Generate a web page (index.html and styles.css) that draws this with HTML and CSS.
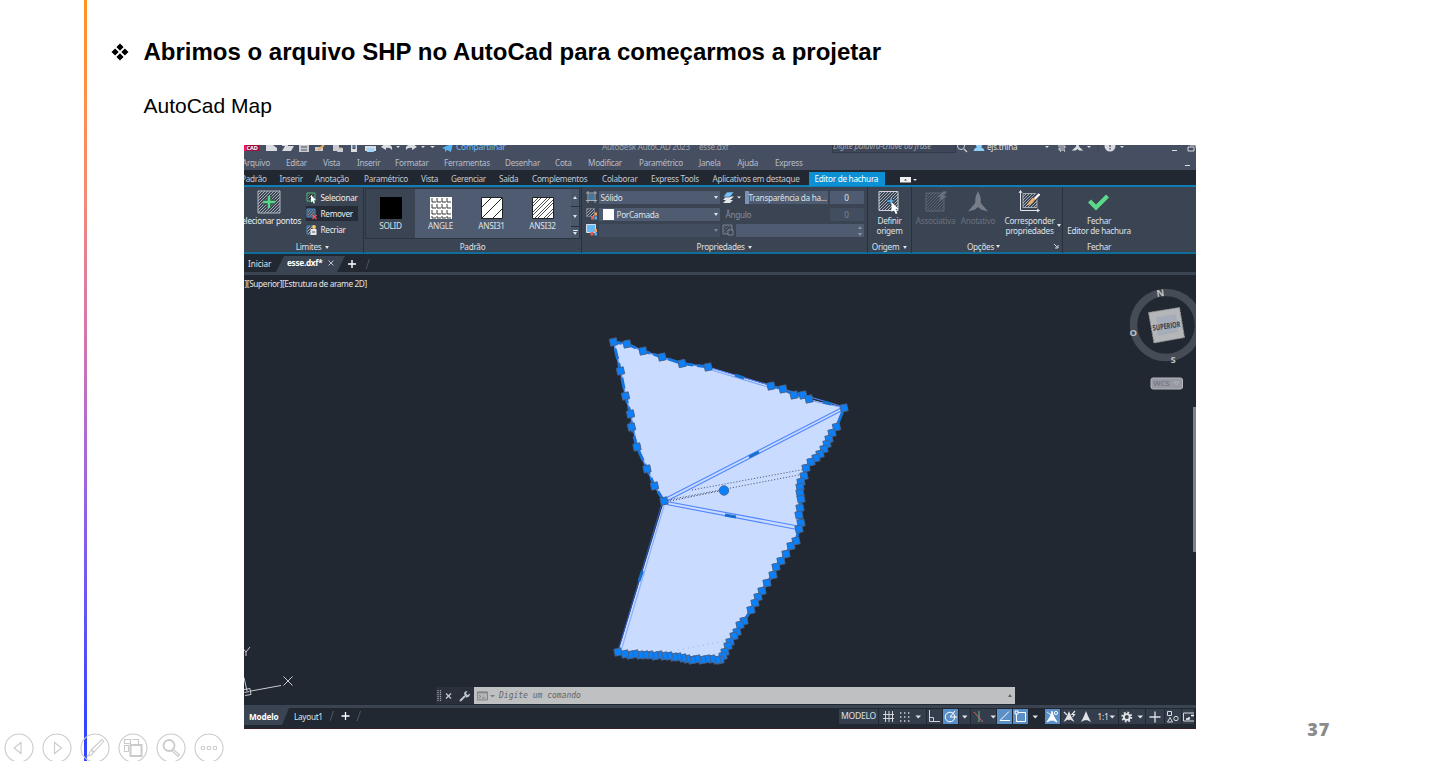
FILE: index.html
```html
<!DOCTYPE html>
<html lang="pt-BR">
<head>
<meta charset="utf-8">
<title>Abrimos o arquivo SHP no AutoCad</title>
<link rel="stylesheet" href="styles.css">
</head>
<body>
<svg class="defs" width="0" height="0">
  <defs>
    <pattern id="hatch" width="3" height="3" patternUnits="userSpaceOnUse"><path d="M-1 1L1-1M0 3L3 0M2 4L4 2" stroke="#c3c8d0" stroke-width=".8"/></pattern>
    <pattern id="hatchDim" width="3" height="3" patternUnits="userSpaceOnUse"><path d="M-1 1L1-1M0 3L3 0M2 4L4 2" stroke="#626b79" stroke-width=".8"/></pattern>
    <marker id="grip" markerUnits="userSpaceOnUse" markerWidth="12" markerHeight="12" refX="6" refY="6" viewBox="0 0 12 12"><rect x="2.5" y="2.5" width="7" height="7" transform="rotate(-12 6 6)" fill="#0a80fa" stroke="#46628a" stroke-width=".9"/></marker>
  </defs>
</svg>
<main class="slide">
  <div class="rule"></div>
  <section class="content">
    <h1><svg class="bullet" width="18" height="18" viewBox="0 0 18 18"><path d="M9 .5l3.600 3.600L9 7.700 5.400 4.100zM9 10.300l3.600 3.600L9 17.500l-3.600-3.600zM4.100 5.400L7.700 9l-3.600 3.600L.5 9zM13.900 5.400L17.500 9l-3.600 3.600L10.300 9z"/></svg>Abrimos o arquivo SHP no AutoCad para começarmos a projetar</h1>
    <p class="sub">AutoCad Map</p>
    <div class="cad">
      <div class="titlebar">
        <svg class="quick" width="200" height="8" viewBox="244 145 200 8">
          <path d="M244 145h15v6h-15z" fill="#a00f38"/><path d="M244 145h2v6h-2z" fill="#ff1654"/><text class="logo" x="246.500" y="149.500">CAD</text>
          <path d="M266 145h7l4 3v3h-11zM282 151l3-5h9l-3 5zM282 145h6v1h-6z" fill="#d9dce1"/>
          <path d="M299 145h10v7h-10z" fill="#c8cbd1"/><path d="M301 147h6M301 150h6" stroke="#4b5263"/>
          <path d="M315 147h8v4h-8z" fill="#c8cbd1"/><path d="M318 150l6-5" stroke="#e9a85b" stroke-width="2"/>
          <path d="M333 145h6v6h-6zM339 148h4v4h-6z" fill="#c8cbd1"/><path d="M339 148h3" stroke="#e9a85b"/>
          <path d="M351 145h6v7h-6z" fill="#d9dce1"/><path d="M352.500 145h3v4h-3z" fill="#464e61"/><path d="M354 144v4" stroke="#55aee4"/>
          <path d="M365 146h11v5h-11z" fill="#d9dce1"/><path d="M367 148h7v4h-7z" fill="#9ed5fa"/>
          <path d="M381 147l5-4v2q7-1 6 5-2-3-6-2v2zM417 147l-5-4v2q-7-1-6 5 2-3 6-2v2z" fill="#d9dce1"/>
          <path d="M396 146h4l-2 2zM421 146h4l-2 2zM430 146h5l-2.500 2z" fill="#d9dce1"/>
        </svg>
        <span class="share"><svg width="11" height="8" viewBox="0 0 11 8"><path d="M0 3L11-2 9 7 5 5 3 7V4z" fill="#55b4f0"/></svg>Compartilhar</span>
        <span class="apptitle">Autodesk AutoCAD 2023</span><span class="docname">esse.dxf</span>
        <span class="search">Digite palavra-chave ou frase</span>
        <svg width="30" height="8" viewBox="956 145 30 8"><circle cx="961" cy="146" r="3.500" fill="none" stroke="#ccd0d7"/><path d="M964 149l3 3" stroke="#ccd0d7" stroke-width="1.300"/><circle cx="979" cy="145" r="3" fill="#8fd0fb"/><path d="M973.500 151q1-4 5.500-4t5.500 4z" fill="#8fd0fb"/></svg>
        <span class="user">ejs.trilha</span>
        <svg width="158" height="8" viewBox="1038 145 158 8"><path d="M1045 146h4l-2 2zM1087 146h4l-2 2zM1120 146h4l-2 2z" fill="#d9dce1"/><path d="M1058 146h7v2h-6v2h6" fill="none" stroke="#d9dce1"/><path d="M1060 151h1M1064 151h1" stroke="#fff"/><path d="M1077.500 142l1.800 5 4 3.500h-4l-1.800-1.500-1.800 1.500h-4l4-3.500z" fill="#d9dce1"/><path d="M1098 145v8" stroke="#3b4353"/><circle cx="1110" cy="146" r="5.500" fill="#d9dce1"/><path d="M1110 145v2M1110 148v1.500" stroke="#464e61" stroke-width="1.300"/><path d="M1172 150.500h5M1188 147h6v4h-6zM1190 145h6v3" fill="none" stroke="#d9dce1"/></svg>
      </div>
      <nav class="menubar"><span>Arquivo</span><span>Editar</span><span>Vista</span><span>Inserir</span><span>Formatar</span><span>Ferramentas</span><span>Desenhar</span><span>Cota</span><span>Modificar</span><span>Paramétrico</span><span>Janela</span><span>Ajuda</span><span>Express</span><i class="mini"></i></nav>
      <nav class="tabs"><span>Padrão</span><span>Inserir</span><span>Anotação</span><span>Paramétrico</span><span>Vista</span><span>Gerenciar</span><span>Saída</span><span>Complementos</span><span>Colaborar</span><span>Express Tools</span><span>Aplicativos em destaque</span><b>Editor de hachura</b><svg width="20" height="6" viewBox="0 0 20 6"><path d="M0 0h11v5.500H0z" fill="#f1f1f1"/><path d="M4 3.500h3L5.500 2z" fill="#333"/><path d="M13 2h4l-2 2z" fill="#e0e0e0"/></svg></nav>

      <div class="ribbon">
        <section class="panel limits">
          <div class="body">
            <div class="pick"><svg width="24" height="24" viewBox="0 0 24 24"><path d="M1 1h22v22H1z" fill="url(#hatch)" stroke="#aeb5bf"/><path d="M12 6v12M6 12h12" stroke="#3b4453" stroke-width="5"/><path d="M12 6v12M6 12h12" stroke="#57d585" stroke-width="2.600"/></svg><span>Selecionar pontos</span></div>
            <ul>
              <li><svg width="11" height="12" viewBox="0 0 11 12"><path d="M1 1h8v8H1z" fill="#303844" stroke="#56bb7c"/><path d="M2.500 2.500h5v5h-5z" fill="url(#hatch)"/><path d="M5 3l5 5-2.300.2L9 11l-1.300.5L6.500 9 5 10.500z" fill="#fff"/></svg>Selecionar</li>
              <li class="on"><svg width="11" height="12" viewBox="0 0 11 12"><path d="M1 1h8v8H1z" fill="#48596e" stroke="#4b91ca"/><path d="M2 2h6v6H2z" fill="url(#hatch)" opacity=".6"/><path d="M6.500 7l4 4M10.500 7l-4 4" stroke="#fa5258" stroke-width="1.300"/></svg>Remover</li>
              <li><svg width="11" height="12" viewBox="0 0 11 12"><path d="M1 2h7v8H1z" fill="url(#hatch)" stroke="#438bbf"/><path d="M4.500 5h6v6h-6z" fill="#e6e6e6"/><path d="M6 8h3" stroke="#555"/><circle cx="8" cy="3" r="1.900" fill="#f5c86c"/></svg>Recriar</li>
            </ul>
          </div>
          <footer>Limites <i class="dn"></i></footer>
        </section>
        <section class="panel patterns">
          <div class="body">
            <div class="sw sel"><svg width="22" height="22"><path d="M0 0h22v22H0z"/></svg>SOLID</div>
            <div class="sw"><svg width="22" height="22" viewBox="0 0 22 22"><path d="M0 0h22v22H0z" fill="#fff"/><path d="M2 1v4h4M7 1v4h4M12 1v4h4M17 1v4h4M2 7v4h4M7 7v4h4M12 7v4h4M17 7v4h4M2 13v4h4M7 13v4h4M12 13v4h4M17 13v4h4M2 19v2h4M7 19v2h4M12 19v2h4M17 19v2h4" fill="none" stroke="#222" stroke-width=".9"/></svg>ANGLE</div>
            <div class="sw"><svg width="22" height="22" viewBox="0 0 22 22"><path d="M.5.500h21v21H.5z" fill="#fff" stroke="#222"/><path d="M1 10L10 1M1 21L21 1M12 21l9-9" stroke="#222"/></svg>ANSI31</div>
            <div class="sw"><svg width="22" height="22" viewBox="0 0 22 22"><path d="M.5.500h21v21H.5z" fill="#fff" stroke="#222"/><path d="M1 6l5-5M1 9l8-8M1 15L15 1M1 18L18 1M3 21L21 3M6 21L21 6M12 21l9-9M15 21l6-6" stroke="#222" stroke-width=".8"/></svg>ANSI32</div>
            <div class="scroll"><span><i class="up"></i></span><span><i class="dn"></i></span><span class="more"><i class="dn"></i></span></div>
          </div>
          <footer>Padrão</footer>
        </section>
        <section class="panel props">
          <div class="body">
            <svg width="11" height="12" viewBox="0 0 11 12"><path d="M2 0v12M9 0v12M0 2h11M0 9.500h11" stroke="#c4c9d0" stroke-width=".8"/><path d="M3 3h5v6H3z" fill="#3f78a2"/></svg>
            <div class="field">Sólido<i class="dn"></i></div>
            <svg class="lay" width="20" height="13" viewBox="0 0 20 13"><path d="M4 9h7l-3 3H1zM4 5.500h8L8 9H1z" fill="#e5e8eb"/><path d="M5 1h7L8 6H1z" fill="#76c4fb" stroke="#3b4453" stroke-width=".6"/><path d="M15 5.500h4l-2 2z" fill="#eee"/></svg>
            <div class="field trans">Transparência da ha...</div><div class="field num">0</div>

            <svg width="11" height="12" viewBox="0 0 11 12"><path d="M.5.500h8v8h-8z" fill="url(#hatch)" stroke="#8e959f" stroke-width=".6"/><path d="M5 8h3v3.500H5z" fill="#eb5a55"/><path d="M8.500 4.500h2.500v3H8.500z" fill="#f0a163"/><path d="M8.500 8.500h2.500v3H8.500z" fill="#58aee9"/></svg>
            <div class="field"><b class="white"></b>PorCamada<i class="dn"></i></div>
            <div class="angle">Ângulo</div><div class="field num dim">0</div>

            <svg width="11" height="12" viewBox="0 0 11 12"><path d="M.5.500h9v8h-9z" fill="#65baf5" stroke="#e6eaee" stroke-width=".9"/><path d="M4.500 8h3v3.500h-3z" fill="#eb5a55"/><path d="M8.500 5h2.500v3H8.500z" fill="#f0a163"/><path d="M8.500 8.500h2.500v3H8.500z" fill="#58aee9"/></svg>
            <div class="field dim empty"><i class="dn"></i></div>
            <svg width="12" height="12" viewBox="0 0 12 12"><path d="M1 1h9v9H1z" fill="url(#hatchDim)" stroke="#8b929c" stroke-width=".8"/><path d="M6 6h5v5H6z" fill="#3b4453" stroke="#8b929c" stroke-width=".8"/></svg>
            <div class="field scale"><span class="spin"><i class="up"></i><i class="dn"></i></span></div>
          </div>
          <footer>Propriedades <i class="dn"></i></footer>
        </section>
        <section class="panel origin">
          <div class="body"><div class="big"><svg width="24" height="26" viewBox="0 0 24 26"><path d="M1 1.500h19v19H1z" fill="url(#hatch)" stroke="#d0d4da"/><path d="M13 8v7M9.500 11.500h7" stroke="#3b4453" stroke-width="4"/><path d="M13 8v6M9.500 11h6" stroke="#62bdf5" stroke-width="1.400"/><path d="M13.500 12l7 7-3 .3 2 4-1.800.7-1.800-4-2.400 2z" fill="#fff"/></svg><span>Definir<br>origem</span></div></div>
          <footer>Origem <i class="dn"></i></footer>
        </section>
        <section class="panel options">
          <div class="body">
            <div class="big off"><svg width="24" height="26" viewBox="0 0 24 26"><path d="M2 3h18v18H2z" fill="url(#hatchDim)" stroke="#5e6775"/><path d="M20 1l-7 6h4l-2 5 8-6h-4l4-4z" fill="#69717e"/></svg><span>Associativa</span></div>
            <div class="big off"><svg width="24" height="26" viewBox="0 0 24 26"><path d="M12 1l2.500 6 .3 6 7.200 8.500-7-2-3-2.500-3 2.500-7 2L9.200 13l.3-6z" fill="#777e89"/></svg><span>Anotativo</span></div>
            <div class="big match"><svg width="24" height="26" viewBox="0 0 24 26"><path d="M2.500 1v19.500H21" fill="none" stroke="#e4e6e9"/><path d="M1 3l1.500-2.500L4 3M19 19l2.500 1.500L19 22" fill="none" stroke="#e4e6e9"/><path d="M5 3.500h14v14H5z" fill="url(#hatch)" stroke="#a6adb7"/><path d="M21 4l-9 9" stroke="#3b4453" stroke-width="5"/><path d="M21.500 4L16 9.500" stroke="#fff" stroke-width="2.300"/><path d="M17 9l-3 4-5 2q4-5 6-7z" fill="#edb16c" stroke="#edb16c"/></svg><span>Corresponder<br>propriedades</span><i class="dn"></i></div>
          </div>
          <footer>Opções <i class="dn"></i><svg class="launch" width="5" height="5" viewBox="0 0 5 5"><path d="M0 0l3.500 3.500M4 1v3H1" fill="none" stroke="#d5d8dd"/></svg></footer>
        </section>
        <section class="panel close">
          <div class="body"><div class="big"><svg width="24" height="26" viewBox="0 0 24 26"><path d="M1 12.500l3-3 5 5L19 4.500l3 3L9 20.500z" fill="#5bd88a"/></svg><span>Fechar<br>Editor de hachura</span></div></div>
          <footer>Fechar</footer>
        </section>
      </div>

      <div class="files"><span class="start">Iniciar</span><span class="file"><b>esse.dxf*</b><svg width="6" height="6" viewBox="0 0 6 6"><path d="M.5.500l5 5M5.500.500l-5 5" stroke="#b9bfc8"/></svg></span><svg width="26" height="12" viewBox="0 0 26 12"><path d="M5 2v8M1 6h8" stroke="#fff" stroke-width="1.400"/><path d="M19 11l3.500-10" stroke="#4b5361"/></svg></div>

      <div class="canvas">
        <svg class="drawing" width="952" height="430" viewBox="244 275 952 430">
          <text x="244.500" y="287.200" textLength="122.500" class="view">][Superior][Estrutura de arame 2D]</text>
          <path fill="#c9dbff" d="M613 342L627 344 643 351 662 357 682 363.500 708 367 771 386 783 389 794 395 809 399 844 408 836 427 828 439 824 449 815 458 806 468 804 476 800 487 801 499 799 516 800 529 796 541 786 554 776 567 767 583 755 603 740 625 730 642 720 660 697 660 670 657 642 655 618 652 664 501 655 486 647 469 637 447 630 414 620 371z"/>
          <g fill="none" stroke="#4f86ff" stroke-width="1.100">
            <path d="M664 499L844 406.500M665 502L845 409M664 501L798 526M664 504L797 529.500M708 367L844 407"/>
            <path d="M662 503L618 651" stroke="#2a57b5"/><path d="M664.500 504L621 651" stroke="#86adff"/><path d="M708 369L771 388M808 400L840 407" stroke="#7da6fa"/>
            <path d="M708 367L682 363.500 662 357 643 351 627 344 613.500 342 620.500 371 625.500 396 630.500 414 637 447 647 469 654.500 486 664 501" stroke="#5a8dee" stroke-width="1.500"/>
          </g>
          <g stroke="#1670cc" stroke-width="3"><path d="M749 457l10-5M725 515l11 2M642.500 571l-3.500 10M735 375l9 3M823 402l8 2"/></g>
          <g stroke="#46536d" stroke-width=".9" stroke-dasharray="1.200 1.800" fill="none"><path d="M668 500L804 474"/><path d="M692 490L806 469"/><path d="M670 501L724 490" stroke="#28334a"/><path d="M678 650L724 641" stroke="#8aa9dd" stroke-dasharray="1 4"/></g>
          <polyline fill="none" stroke="#1675dd" stroke-width="3" stroke-dasharray="11 4" marker-start="url(#grip)" marker-mid="url(#grip)" marker-end="url(#grip)" points="708,367 682,363.500 662,357 643,351 627,344 613.500,342 620.500,371 625.500,396 630.500,414 631.500,427 637,447 647,469 654.500,486 664,501"/>
          <polyline fill="none" stroke="#1675dd" stroke-width="2.600" marker-start="url(#grip)" marker-mid="url(#grip)" marker-end="url(#grip)" points="771,386 783,389 794,395 803,395 809,399"/>
          <polyline fill="none" stroke="#1675dd" stroke-width="3" marker-start="url(#grip)" marker-mid="url(#grip)" marker-end="url(#grip)" points="844,408 836.500,427 832,433 829,439 827,444 824,449 820,454 816,458 811,462 806,468 804,476 801,482 800,487 800,493 801,499 800,508 799,515 801,523 799,529 796,541 791,546 786,554 781,561 776,567 773,575 767,583 762,591 758,597 755,603 751,610 744,621 740,625 737,632 734,636 730,642 728,646 725,652 723,656 720,660 717,660 712,659 707,659 702,660 697,659 692,660 687,659 683,658 678,657 674,657 669,656 664,656 659,655 655,656 650,655 645,655 640,655 635,654 630,655 625,654 618,652"/>
          <circle cx="724" cy="490.500" r="4.700" fill="#0a80fa" stroke="#426ba5"/>

          <circle cx="1166" cy="325" r="32.500" fill="none" stroke="#454c55" stroke-width="7.500"/>
          <path d="M1148.500 312.500L1179.500 307.500 1184.500 337.500 1154 343z" fill="#b5b6b8" stroke="#8e9195" stroke-dasharray="2 1"/>
          <path d="M1156 317l20-3 2 18-20 4z" fill="#a6adb9"/>
          <text class="cube" x="1152.500" y="329" textLength="28" lengthAdjust="spacingAndGlyphs" transform="rotate(-8 1166 326)">SUPERIOR</text>
          <g class="points"><text x="1156.500" y="296.500" transform="rotate(-8 1160 294)">N</text><text x="1129.500" y="335.500">O</text><text x="1170.500" y="363">S</text></g>
          <rect x="1151" y="378" width="31.500" height="11" rx="2" fill="#989aa3" stroke="#b6b8be"/><text class="wcs" x="1153.500" y="385.800">WCS</text><path d="M1174 382h5l-2.500 3z" fill="none" stroke="#b4b7bf" stroke-width=".8"/>
          <path d="M1195 407v145" stroke="#7d838d" stroke-width="4"/>

          <g fill="none" stroke="#c9ccd0"><path d="M251 691L281 685.500M244 677.500L247 691M283.500 676.500l9 9M292.500 676.500l-9 9M244 689.500l6-1 1 6-6 1M244.500 692.500l5-1M242 647.500l4 4.500 4-5M246 652v4"/></g>
        </svg>
        <div class="command">
          <svg width="38" height="16" viewBox="0 0 38 16"><path d="M2 3v11M4.500 3v11" stroke="#9da2a9" stroke-width="1.300" stroke-dasharray="1.200 .8"/><path d="M10 6.500l5 5M15 6.500l-5 5" stroke="#c5c8cc" stroke-width="1.300"/><path d="M24 14l5-5" stroke="#bfc2c6" stroke-width="2"/><path d="M28 7q0-3 3.500-3L30 6.500 31.500 8 34 6.500q0 4-4 4z" fill="#bfc2c6"/></svg>
          <div class="input"><svg width="18" height="10" viewBox="0 0 18 10"><path d="M.5 1h10v8H.5z" fill="#b3b4b6" stroke="#828589"/><path d="M.5 1.500h10" stroke="#828589" stroke-width="1.500"/><path d="M2 4l2 1.500L2 7M5 7h3" fill="none" stroke="#777" stroke-width=".8"/><path d="M13 4h5l-2.500 2.500z" fill="#7b7d80"/></svg><em>Digite um comando</em><i class="up"></i></div>
        </div>
      </div>

      <div class="status">
        <div class="layouts"><b>Modelo</b><span>Layout1</span><svg width="40" height="12" viewBox="0 0 40 12"><path d="M0 11L3.500 1M27 11l3.500-10" stroke="#4f5866"/><path d="M15.500 2v8M11.500 6h8" stroke="#fff" stroke-width="1.300"/></svg></div>
        <div class="tools">
          <span class="t">MODELO</span>
          <span><svg width="45" height="15" viewBox="879 709 45 15"><path d="M885.500 711v11M889 711v11M883 714.500h11M883 718.500h11M892.500 711v11" stroke="#d2d6db" fill="none"/><path d="M900 713h11M900 717h11M900 721h11" stroke="#d2d6db" stroke-width="1.400" stroke-dasharray="1.400 2.600"/><path d="M915.500 715.500h5.500l-2.700 3z" fill="#e2e4e8"/></svg></span>
          <span><svg width="14" height="15" viewBox="0 0 14 15"><path d="M2.500 1v11.500H13M2.500 8.500h4v4" fill="none" stroke="#cdd1d7"/></svg></span>
          <span class="on"><svg width="15" height="15" viewBox="0 0 15 15"><circle cx="7" cy="8" r="4.800" fill="none" stroke="#fff"/><path d="M7 8h7M7 8l5-6" stroke="#fff"/></svg></span>
          <span><svg width="10" height="15"><path d="M3 6.500h5.500l-2.700 3z" fill="#e2e4e8"/></svg></span>
          <span><svg width="26" height="15" viewBox="970 709 26 15"><path d="M978 711v11" stroke="#58c583"/><path d="M973 712l9 10" stroke="#d9656b"/><path d="M989.500 715.500h5.500l-2.700 3z" fill="#e2e4e8"/></svg></span>
          <span class="on"><svg width="15" height="15" viewBox="0 0 15 15"><path d="M12 2.500L3 11.500h10" fill="none" stroke="#fff"/></svg></span>
          <span class="on"><svg width="15" height="15" viewBox="0 0 15 15"><path d="M3.500 3.500h9v9h-9z" fill="none" stroke="#fff"/><path d="M2 2h3v3H2z" fill="#5b8fc7" stroke="#fff"/></svg></span>
          <span class="flat"><svg width="14" height="15"><path d="M3.500 6.500H9l-2.700 3z" fill="#e2e4e8"/></svg></span>
          <span class="on"><svg width="15" height="15" viewBox="0 0 15 15"><path d="M7 2l1.500 5 3.500 6-4-2-1 .5L6 11l-4 2 3.500-6zM2 3l4 3" fill="#fff" stroke="#fff" stroke-width=".8"/><circle cx="11" cy="4" r="1.600" fill="none" stroke="#fff"/></svg></span>
          <span><svg width="67" height="15" viewBox="1059 709 67 15"><path d="M1067 711l2 5 3.500 6-4.500-2.500-1 1-1-1-4.500 2.500 3.500-6zM1084 711l2 5 3 6-4-2-1 .5-1-.5-4 2 3-6z" fill="#e0e2e5"/><path d="M1073 711l-3 3.500h2.500l-2 2.500M1062 712l3 3" fill="none" stroke="#e0e2e5" stroke-width="1.200"/><text x="1095.500" y="719.800" class="ratio">1:1</text><path d="M1107.500 715.500h5.500l-2.700 3z" fill="#e2e4e8"/></svg></span>
          <span><svg width="26" height="15" viewBox="1118 709 26 15"><circle cx="1125.800" cy="717" r="4.300" fill="none" stroke="#e0e2e5" stroke-width="2.400" stroke-dasharray="1.700 1.677"/><circle cx="1125.800" cy="717" r="2.900" fill="none" stroke="#e0e2e5" stroke-width="1.900"/><path d="M1136.500 715.500h5.500l-2.700 3z" fill="#e2e4e8"/></svg></span>
          <span><svg width="18" height="15" viewBox="0 0 18 15"><path d="M9 2.500v11M3.500 8h11" stroke="#e0e2e5" stroke-width="1.300"/></svg></span>
          <span><svg width="16" height="15" viewBox="0 0 16 15"><path d="M2.500 2.500h4v4h-4zM5 8.500l2.500 4.500h-5z" fill="none" stroke="#d6d9de"/><circle cx="11" cy="9.500" r="2.200" fill="none" stroke="#d6d9de"/></svg></span>
          <span><svg width="12" height="15" viewBox="0 0 12 15"><path d="M1.500 4h12v8h-12z" fill="none" stroke="#d6d9de"/><path d="M4 10h3V8M9 6.500h3" stroke="#fff" fill="none" stroke-width="1.300"/></svg></span>
        </div>
      </div>
    </div>
  </section>
  <div class="page">37</div>
  <div class="controls">
    <svg viewBox="0 0 30 30"><circle cx="15" cy="15" r="14"/><path d="M17 9.500v11L10 15z"/></svg>
    <svg viewBox="0 0 30 30"><circle cx="15" cy="15" r="14"/><path d="M12.500 9.500v11L19.500 15z"/></svg>
    <svg viewBox="0 0 30 30"><circle cx="15" cy="15" r="14"/><path d="M22 6.500q1.500.5 1.500 2L14 19l-2.500-2.500zM11.500 17l2 2q-2 4-6 4 2-1.500 2-3.500z"/></svg>
    <svg viewBox="0 0 30 30"><circle cx="15" cy="15" r="14"/><path d="M6.500 6.500h6v4h-6zM14.500 6.500h6V11M6.500 12.500h4v6h-4zM12.500 12h11v11h-11z"/><path d="M12.500 12h11v11h-11z" stroke-width="2"/></svg>
    <svg viewBox="0 0 30 30"><circle cx="15" cy="15" r="14"/><circle cx="13" cy="12.500" r="5.500" stroke-width="1.800"/><path d="M17 16l6.500 6-1.500 1.500L15.500 17.500"/></svg>
    <svg viewBox="0 0 30 30"><circle cx="15" cy="15" r="14"/><circle cx="9" cy="15" r="1.800"/><circle cx="15" cy="15" r="1.800"/><circle cx="21" cy="15" r="1.800"/></svg>
  </div>
</main>
</body>
</html>
```
FILE: styles.css
```css
* { box-sizing: border-box; }
body { margin: 0; background: #fff; font-family: "Liberation Sans", Arial, sans-serif; }
svg { display: block; flex: none; }
.defs { position: absolute; }
.slide { position: relative; display: grid; grid-template-columns: 3px 1112px; padding-left: 84px; width: 1440px; height: 761px; overflow: hidden; }
.rule { height: 761px; background: linear-gradient(#ff9320 0, #fd904a 13%, #f48a74 25%, #d878aa 42%, #a468d8 61%, #6c58f4 78%, #3344ff 95%); }
.content { padding: 36px 0 0 24px; }
h1 { display: flex; align-items: center; height: 32px; margin: 0; font-size: 24px; line-height: 32px; white-space: nowrap; }
.bullet { margin-right: 14.500px; }
.sub { margin: 25px 0 0 32.500px; height: 24px; font-size: 21px; line-height: 25px; white-space: nowrap; }
.page { position: absolute; right: 110px; top: 718px; font: 800 18px/22px "Open Sans", sans-serif; color: #8b8b8b; letter-spacing: .8px; }
.controls { position: absolute; left: 4px; top: 733px; display: flex; gap: 8px; }
.controls svg { width: 30px; height: 30px; fill: none; stroke: #cbcbcb; stroke-width: 1.1; }

.cad { width: 952px; height: 584px; margin: 28px 0 0 133px; overflow: hidden; background: #222831; font: 8.200px/10px "Noto Sans", "Open Sans", sans-serif; letter-spacing: -.28px; color: #dfe2e7; white-space: nowrap; display: flex; flex-direction: column; }
.up, .dn { display: inline-block; border: 2.500px solid transparent; border-top: 3px solid currentColor; border-bottom: 0; }
.up { border-top: 0; border-bottom: 3px solid currentColor; }

.titlebar { height: 10px; background: #464e61; display: grid; grid-template-columns: 198px 160px 97px 133px 124px 30px 52px 158px; line-height: 5px; color: #9da4b0; }
.logo { font: 700 5.500px "Noto Sans", sans-serif; letter-spacing: 0; fill: #fff; }
.share { display: flex; gap: 3px; color: #67bdf4; font-size: 8.500px; line-height: 3px; }
.apptitle, .docname { line-height: 4px; }
.search { height: 8px; border: 1px solid #333b49; border-top: 0; background: #3e4658; font-style: italic; line-height: 2px; }
.user { color: #dfe2e7; line-height: 4px; padding-left: 1px; }
.menubar { height: 15px; background: #464e61; display: grid; grid-template-columns: 42px 37px 34px 38px 49px 61px 50px 33px 51px 60px 38.500px 37.500px 410px 20px; line-height: 15px; color: #b7bdc7; }
.menubar span:first-child { margin-left: -2px; }
.mini { width: 5px; height: 1px; margin: 10px 0 0 0; background: #ddd; }
.tabs { height: 17px; padding-bottom: 1px; background: #222831; border-bottom: 2px solid #0e7eb4; display: grid; grid-template-columns: 35.500px 35.500px 49px 57px 30px 48px 33px 70px 49px 61.500px 96px 91px 20px; line-height: 18px; color: #c4c9d1; }
.tabs span:first-child { margin-left: -3px; }
.tabs b { width: 76px; height: 14px; padding-left: 6px; margin-top: 2px; background: #0b91d3; color: #fff; font-weight: 400; line-height: 14px; }
.tabs svg { margin-top: 7px; }

.ribbon { height: 67px; background: #3b4453; border-bottom: 2px solid #0e6d99; display: grid; grid-template-columns: 120px 218px 286px 44px 151px 1fr; }
.panel { border-right: 1px solid #29313d; display: grid; grid-template-rows: 53px 13px; }
.panel:last-child { border: 0; }
.panel footer { text-align: center; line-height: 13px; }
.panel .body { display: flex; overflow: hidden; }
.panel .dn { vertical-align: 1px; margin-left: 2px; }
.limits footer { padding-left: 18px; }
.limits .pick { width: 62px; padding: 3px 0 0 13px; }
.pick span { display: block; width: 70px; margin: 0 0 0 -20px; line-height: 13px; }
.limits ul { list-style: none; margin: 3px 0 0; padding: 0; width: 52px; }
.limits li { display: flex; align-items: center; gap: 3.500px; height: 15px; margin-bottom: 1.200px; padding-left: 0; }
.limits .on { background: #252c38; }
.limits .body { color: #eceef1; }

.patterns .body { height: 51px; width: 215px; margin: 1px 0 0 1px; border: 1px solid #2c3440; background: #4e5b70; display: grid; grid-template-columns: 49px 51px 51px 51px 1fr; }
.sw { text-align: center; line-height: 13px; padding-top: 8px; }
.sw svg { margin: 0 auto; }
.sw.sel { background: #3b4453; }
.scroll { display: grid; grid-template-rows: 17px 19px 1fr; background: #29313c; gap: 1px; margin-left: 3px; width: 8px; }
.scroll span { background: #4a566a; display: flex; align-items: center; justify-content: center; }
.scroll .dn { margin: 0; }
.scroll .more { flex-direction: column; gap: 1px; }
.scroll .more::before { content: ""; width: 5px; height: 1px; background: #dfe2e7; }

.props .body { display: grid; grid-template-columns: 11px 121px 21px 83px 34px; grid-template-rows: 13px 13px 13px; column-gap: 2px; row-gap: 3.500px; padding: 4px 0 0 3.500px; align-content: start; }
.field { position: relative; background: #4e5b70; display: flex; align-items: center; padding: 0 2px; height: 13px; line-height: 13px; }
.field > .dn { margin: 0 0 0 auto; }
.trans { border-left: 4px solid #7e90b4; padding: 0; }
.num { justify-content: center; }
.dim { background: #424d5f; color: #7b8492; }
.white { width: 11px; height: 11px; background: #fff; margin: 0 3px 0 2px; }
.angle { grid-column: 3 / 5; line-height: 13px; padding-left: 4px; color: #858d99; }
.scale { grid-column: 4 / 6; margin-left: -9px; justify-content: flex-end; color: #8c95a2; }
.spin { display: grid; gap: 4px; }
.spin .dn, .spin .up { margin: 0; border-left-width: 2px; border-right-width: 2px; }
.big { text-align: center; padding-top: 3px; flex: 1; }
.big svg { margin: 0 auto; }
.big span { display: block; margin: 0 -10px; }
.off { color: #687180; }
.options .body { display: grid; grid-template-columns: 47px 38px 65px; }
.match { position: relative; }
.match .dn { position: absolute; right: 1px; top: 37px; border-left-width: 2px; border-right-width: 2px; }
.options footer { display: flex; justify-content: center; align-items: center; padding-left: 52px; }
.launch { margin-left: 54px; }
.close { width: 72px; }

.files { height: 21px; border-bottom: 3px solid #3b4453; display: flex; align-items: stretch; line-height: 20px; }
.start { width: 32px; padding-left: 4px; letter-spacing: -.1px; }
.file { width: 69px; padding-left: 11px; background: #3b4453; clip-path: polygon(8px 2px, 100% 2px, calc(100% - 8px) 100%, 0 100%); display: flex; align-items: center; gap: 6px; color: #fff; }
.files > svg { margin: 4px 0 0 2px; }

.canvas { position: relative; flex: 1; }
.canvas .drawing { height: 430px; }
.view { font-size: 8.300px; fill: #e3e5e8; }
.cube { font: 700 8px "Open Sans", sans-serif; letter-spacing: 0; fill: #3b4049; }
.points { font: 700 9.500px "Open Sans", sans-serif; letter-spacing: 0; fill: #bfc2c6; }
.wcs { font-size: 7.500px; letter-spacing: 0; fill: #686c76; }
.command { position: absolute; left: 192px; bottom: 1px; width: 579px; height: 17px; display: flex; background: #2a303b; }
.input { flex: 1; background: #bfc0c1; display: flex; align-items: center; padding: 0 3px; color: #636568; gap: 4px; letter-spacing: 0; }
.input em { font: italic 8px "DejaVu Sans Mono", monospace; }
.input .up { margin-left: auto; }

.status { height: 24px; border-top: 3px solid #3b4453; border-bottom: 1px solid #3a2026; display: flex; justify-content: space-between; }
.layouts { display: flex; line-height: 17px; height: 17px; }
.layouts b { width: 50px; padding-left: 5px; background: #3b4453; clip-path: polygon(0 0, 45px 0, 38px 100%, 0 100%); color: #fff; letter-spacing: -.15px; }
.layouts span { width: 36px; }
.layouts svg { margin-top: 2px; }
.tools { width: 357px; display: grid; grid-template-columns: 39px 47px 15px 15px 11px 25px 15px 15px 15px 15px 57px 26px 18px 16px 12px; gap: 1px; padding-top: 1px; }
.tools span { height: 15px; background: #343d4b; overflow: hidden; }
.tools .t { line-height: 15px; text-align: center; font-size: 8.600px; }
.tools .on { background: #5b8fc7; }
.tools .flat { background: none; }
.ratio { font: 8px "Noto Sans", sans-serif; letter-spacing: 0; fill: #eee; }
```
